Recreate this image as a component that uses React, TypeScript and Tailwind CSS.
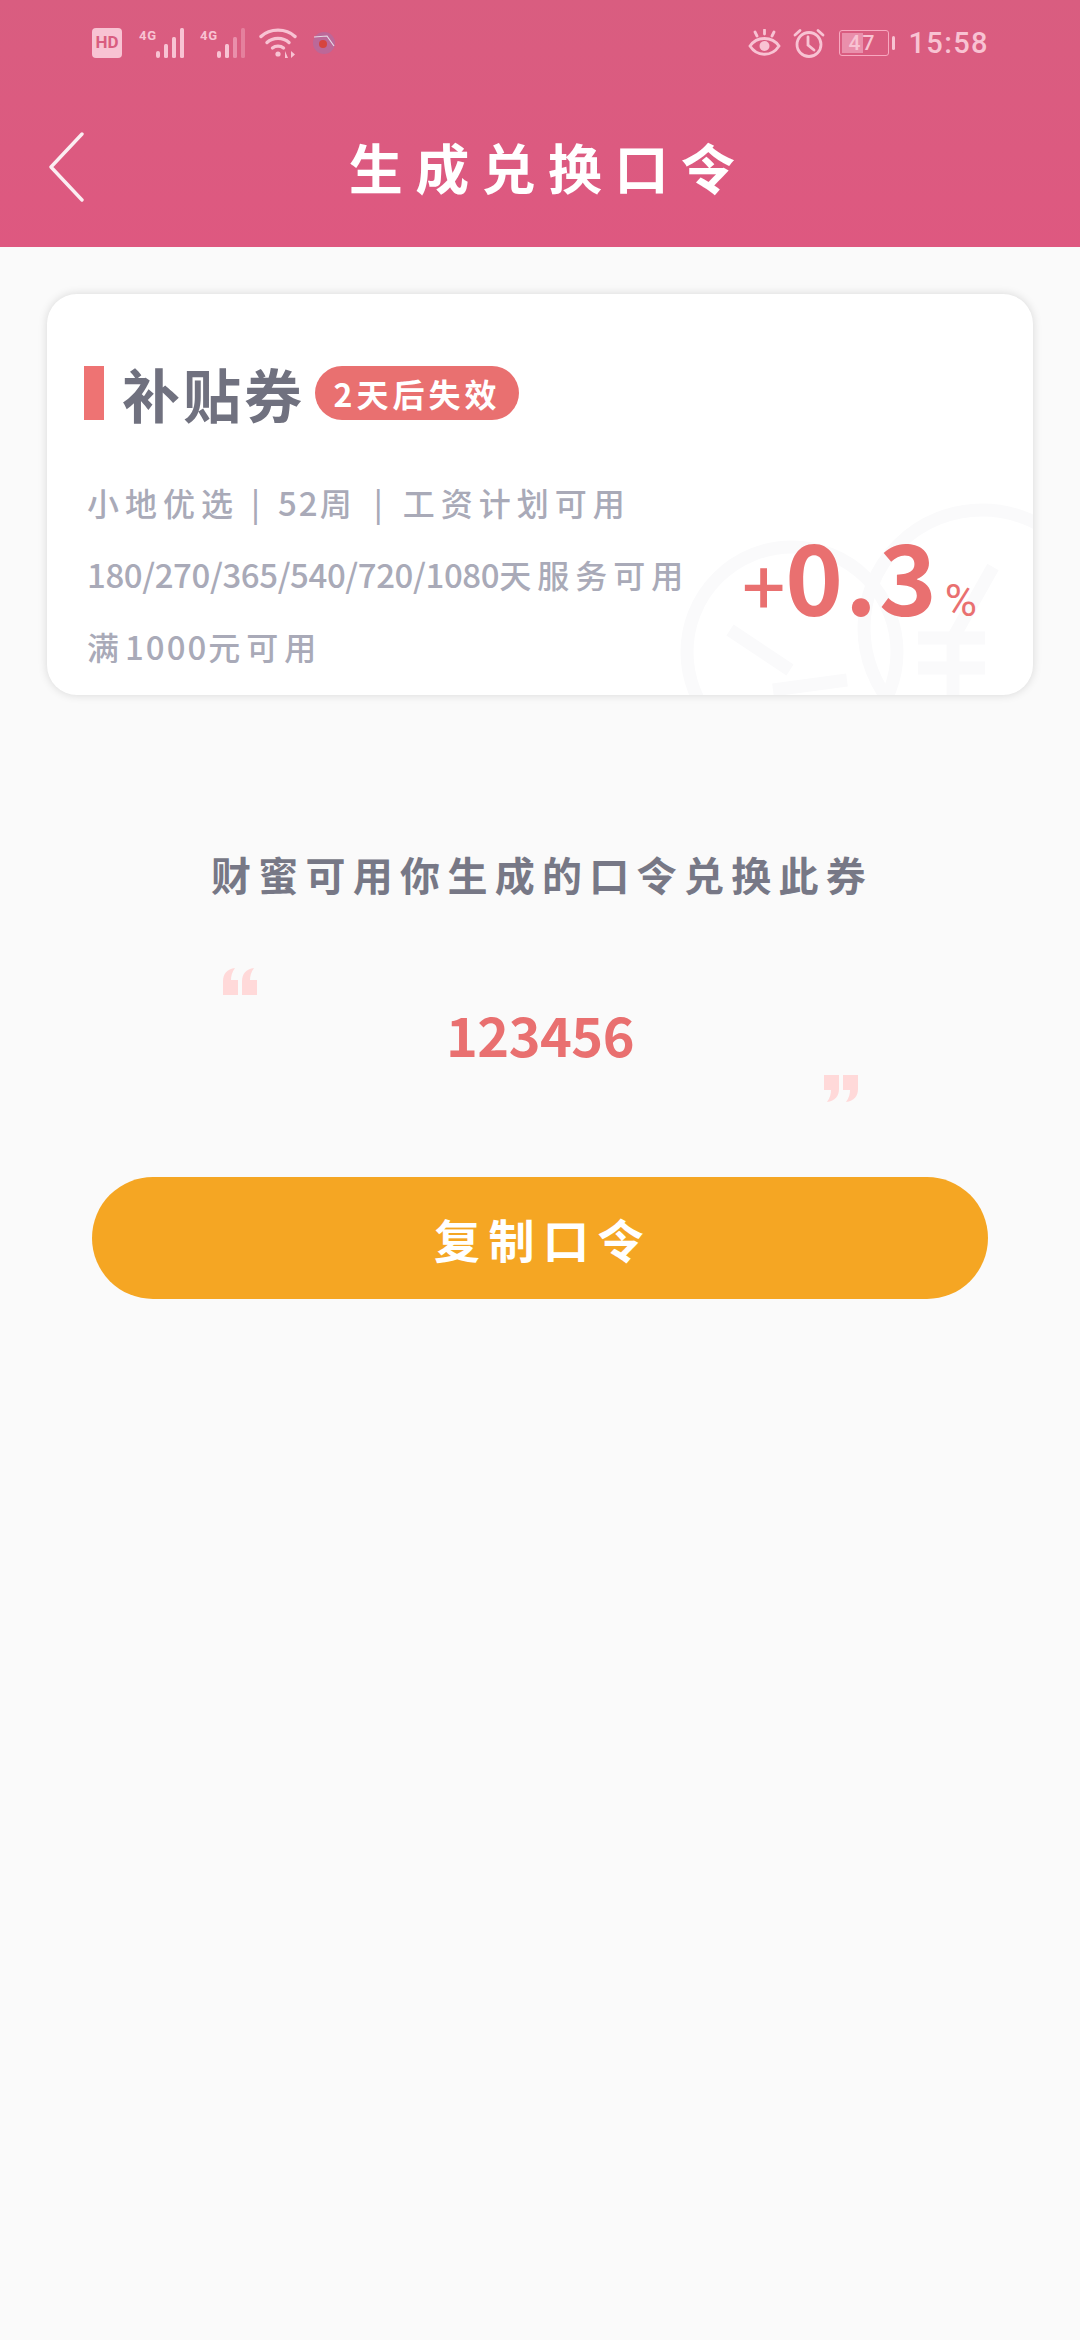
import React from 'react';

const sansClass = "font-['Noto_Sans_CJK_SC','Noto_Sans',sans-serif]";

const SignalBars = ({ dim }: { dim?: boolean }) => (
  <svg width="50" height="32" viewBox="0 0 50 32" fill="#f8c3d3">
    <text x="0" y="13" fontSize="13" fontWeight="700" fontFamily="Roboto, sans-serif" textLength="17">
      4G
    </text>
    <rect x="17" y="24" width="4" height="7" rx="2" />
    <rect x="25" y="17" width="4" height="14" rx="1.5" />
    <rect x="33" y="10" width="4" height="21" rx="1.5" fill={dim ? '#ea8fab' : '#f8c3d3'} />
    <rect x="41" y="1" width="4" height="30" rx="1.5" opacity={dim ? 0.35 : 1} />
  </svg>
);

const StatusBar = () => (
  <div className="flex h-[85px] items-center justify-between pl-[92px] pr-[91px] pt-[1px]">
    <div className="flex items-center">
      <div className="flex h-[30px] w-[30px] items-center justify-center rounded-[4px] bg-[#f8c3d3] font-['Roboto',sans-serif] text-[17px] font-bold text-[#d95d80]">
        HD
      </div>
      <div className="ml-[17px] flex gap-[11px]">
        <SignalBars />
        <SignalBars dim />
      </div>
      <svg className="ml-[9px]" width="38" height="32" viewBox="0 0 38 32" fill="none" stroke="#f8c3d3" strokeWidth="3.4" strokeLinecap="round">
        <path d="M2 9.5C11 1 27 1 36 9.5" />
        <path d="M8 15.5C14 10 24 10 30 15.5" />
        <path d="M13.5 21C16.5 18.5 21.5 18.5 24.5 21" />
        <circle cx="19" cy="27" r="2.6" fill="#f8c3d3" stroke="none" />
        <path d="M26 31V24L29 31ZM32 24V31L36 27.5Z" fill="#f8c3d3" stroke="none" />
      </svg>
      <svg className="ml-[15px]" width="24" height="26" viewBox="0 0 24 26" fill="none">
        <circle cx="12" cy="13" r="11" fill="#a86fa8" opacity="0.6" />
        <circle cx="11" cy="14" r="4" fill="#d6443f" />
        <path d="M2 7L15 6L22 16" stroke="#e6dbe6" strokeWidth="1.2" />
      </svg>
    </div>
    <div className="flex items-center">
      <svg width="33" height="28" viewBox="0 0 33 28" fill="none" stroke="#f8c3d3" strokeWidth="2.8" strokeLinecap="round">
        <path d="M2 17C9 7 24 7 31 17C24 28 9 28 2 17Z" />
        <circle cx="16.5" cy="17" r="5" fill="#f8c3d3" stroke="none" />
        <path d="M16.5 1V5M7 3L9 7M26 3L24 7" />
      </svg>
      <svg className="ml-[12px]" width="32" height="30" viewBox="0 0 32 30" fill="none" stroke="#f8c3d3" strokeWidth="2.8" strokeLinecap="round">
        <circle cx="16" cy="16.5" r="12" />
        <path d="M15 9V17L21 22" />
        <path d="M2 7L7 2.5M30 7L25 2.5" />
      </svg>
      <div className="relative ml-[14px] flex h-[26px] w-[50px] items-center rounded-[3px] border-[1.5px] border-[#f8a8c0]">
        <div className="absolute inset-y-[2px] left-[2px] w-[21px] bg-[#ea8fab]" />
        <span className="relative w-full pr-[4px] text-center font-['Roboto',sans-serif] text-[21px] leading-none font-medium tracking-[2px] text-[#f8c3d3]">
          47
        </span>
      </div>
      <div className="ml-[3px] h-[14px] w-[3px] rounded-full bg-[#f8c3d3]" />
      <span className="ml-[13px] font-['Roboto',sans-serif] text-[29px] leading-none font-medium tracking-[1.4px] text-[#f8c3d3]">
        15:58
      </span>
    </div>
  </div>
);

const CoinMarks = () => (
  <svg className="absolute inset-0" width="986" height="401" viewBox="0 0 986 401" fill="none" stroke="#fafafb" strokeWidth="13">
    <circle cx="745" cy="358" r="105" />
    <circle cx="935" cy="334" r="118" />
    <path d="M683 336L743 376M800 386L726 396" />
    <path d="M946 273L906 344M871 344H938M871 374H938M906 344V401" />
  </svg>
);

const TicketCard = () => (
  <div className="relative mx-[47px] mt-[47px] h-[401px] overflow-hidden rounded-[30px] bg-white pl-[37px] pt-[72px] shadow-[0_0_10px_rgba(0,0,0,0.14)]">
    <CoinMarks />
    <div className="relative flex h-[54px] items-center">
      <div className="h-full w-[20px] bg-[#ee7373]" />
      <span className="ml-[18px] text-[58px] leading-none font-bold tracking-[3px] text-[#70717f]">补贴券</span>
      <span className="ml-[10px] flex h-[54px] w-[204px] items-center justify-center rounded-[27px] bg-[#e97070] text-[32px] leading-none font-bold tracking-[4px] text-white">
        2天后失效
      </span>
    </div>
    <div className="relative mt-[46px] pl-[3px] text-[32px] leading-[72px] font-medium tracking-[6px] whitespace-nowrap text-[#a9aab8]">
      <div>
        小地优选<span className="mr-[18px] ml-[12px] tracking-[0px]">|</span>
        <span className="text-[33px] tracking-[2px]">52</span>周
        <span className="mr-[20px] ml-[16px] tracking-[0px]">|</span>工资计划可用
      </div>
      <div>
        <span className="text-[33px] tracking-[-0.4px]">180/270/365/540/720/1080</span>天服务可用
      </div>
      <div>
        满<span className="text-[33px] tracking-[2px]">1000</span>元可用
      </div>
    </div>
    <div className="absolute right-[56px] bottom-[72px] flex items-baseline text-[#e97070]">
      <span className="text-[76px] leading-none font-medium">+</span>
      <span className="text-[98px] leading-none font-bold tracking-[2px]">0.3</span>
      <span className="ml-[6px] font-['Roboto',sans-serif] text-[44px] leading-none">%</span>
    </div>
  </div>
);

const QuoteMark = ({ flip }: { flip?: boolean }) => (
  <svg width="34" height="27" viewBox="0 0 34 27" fill="#ffd9d9" className={flip ? 'rotate-180' : ''}>
    <path d="M0 27V13C0 6 4 1 12 0C9 4 8 8 8 12H15V27Z" />
    <path d="M19 27V13C19 6 23 1 31 0C28 4 27 8 27 12H34V27Z" />
  </svg>
);

const CodeBlock = () => (
  <div className="mt-[155px] flex flex-col">
    <p className="pl-[4px] text-center text-[40px] leading-[48px] font-bold tracking-[7.3px] text-[#777886]">
      财蜜可用你生成的口令兑换此券
    </p>
    <div className="mt-[70px] pl-[223px]">
      <QuoteMark />
    </div>
    <p className="mt-[3px] text-center text-[54px] leading-[72px] font-bold tracking-[-0.5px] text-[#e97070]">123456</p>
    <div className="mt-[5px] pl-[824px]">
      <QuoteMark flip />
    </div>
  </div>
);

export default function App() {
  return (
    <div className={`flex min-h-[2340px] w-[1080px] flex-col bg-[#fafafa] ${sansClass}`}>
      <div className="bg-gradient-to-b from-[#d95d80] to-[#de5880]">
        <StatusBar />
        <div className="relative flex h-[162px] items-center justify-center pt-[2px] pl-[16px]">
          <svg className="absolute top-[47px] left-[48px]" width="38" height="70" viewBox="0 0 38 70" fill="none" stroke="#fbeef2" strokeWidth="3.4" strokeLinecap="round" strokeLinejoin="round">
            <path d="M34 2L3 35L34 68" />
          </svg>
          <h1 className="text-[54px] leading-none font-bold tracking-[12.4px] text-white">生成兑换口令</h1>
        </div>
      </div>
      <TicketCard />
      <CodeBlock />
      <button className="mx-auto mt-[75px] flex h-[122px] w-[896px] items-center justify-center rounded-full bg-[#f5a623] pl-[6px] text-[46px] font-bold tracking-[8.5px] text-white">
        复制口令
      </button>
    </div>
  );
}
